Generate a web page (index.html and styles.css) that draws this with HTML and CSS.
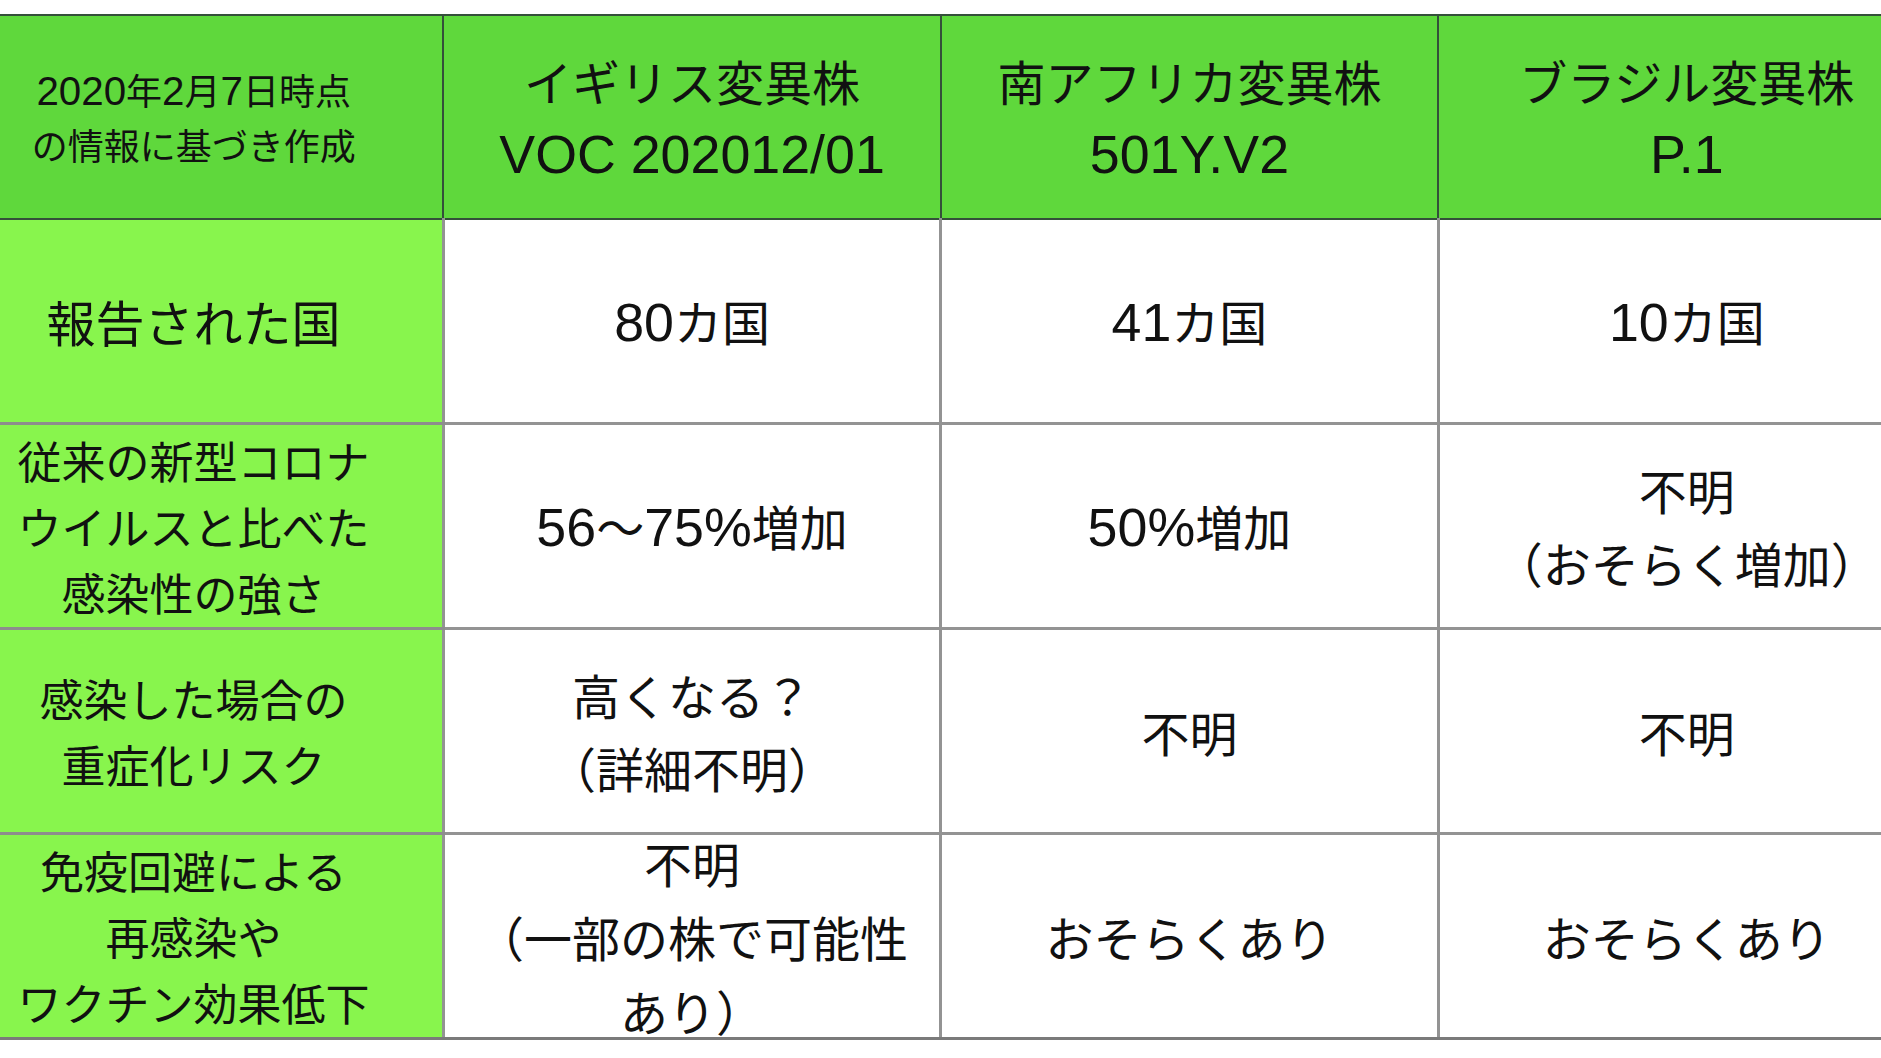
FILE: index.html
```html
<!DOCTYPE html>
<html lang="ja">
<head>
<meta charset="utf-8">
<title>変異株の比較</title>
<link rel="stylesheet" href="styles.css">
</head>
<body>
<div class="frame">
<table class="variants">
  <colgroup>
    <col class="c-label">
    <col class="c-data">
    <col class="c-data">
    <col class="c-data">
  </colgroup>
  <thead>
    <tr>
      <th class="corner"><span class="lat">2020</span>年<span class="lat">2</span>月<span class="lat">7</span>日時点<br>の情報に基づき作成</th>
      <th class="head">イギリス変異株<br><span class="lat">VOC 202012/01</span></th>
      <th class="head">南アフリカ変異株<br><span class="lat">501Y.V2</span></th>
      <th class="head">ブラジル変異株<br><span class="lat">P.1</span></th>
    </tr>
  </thead>
  <tbody>
    <tr>
      <th class="label big">報告された国</th>
      <td><span class="lat">80</span>カ国</td>
      <td><span class="lat">41</span>カ国</td>
      <td><span class="lat">10</span>カ国</td>
    </tr>
    <tr>
      <th class="label">従来の新型コロナ<br>ウイルスと比べた<br>感染性の強さ</th>
      <td><span class="lat">56</span>〜<span class="lat">75%</span>増加</td>
      <td><span class="lat">50%</span>増加</td>
      <td>不明<br>（おそらく増加）</td>
    </tr>
    <tr>
      <th class="label">感染した場合の<br>重症化リスク</th>
      <td>高くなる？<br>（詳細不明）</td>
      <td>不明</td>
      <td>不明</td>
    </tr>
    <tr>
      <th class="label">免疫回避による<br>再感染や<br>ワクチン効果低下</th>
      <td><div class="spill"><div class="spill-text">不明<br>（一部の株で可能性<br>あり）</div></div></td>
      <td>おそらくあり</td>
      <td>おそらくあり</td>
    </tr>
  </tbody>
</table>
</div>
</body>
</html>
```

FILE: styles.css
```css
html, body {
  margin: 0;
  padding: 0;
  background: #ffffff;
  overflow: hidden;
}

.frame {
  padding-top: 14px;
  width: 1881px;
  height: 1044px;
  overflow: hidden;
}

.variants {
  margin-left: -55px;
  border-collapse: collapse;
  table-layout: fixed;
  width: 1992px;
  font-family: "Noto Sans CJK JP", "Noto Sans", sans-serif;
  color: #111111;
}

.lat {
  font-family: "Liberation Sans", "Noto Sans", sans-serif;
  font-size: 1.12em;
}

.c-label { width: 498px; }
.c-data { width: 497px; }

.variants th,
.variants td {
  height: 202px;
  padding: 0;
  text-align: center;
  vertical-align: middle;
  font-weight: 400;
  overflow: visible;
  white-space: nowrap;
}

.variants thead th {
  background: #5fd83c;
  border: 2px solid #34503a;
  font-size: 48px;
  line-height: 72px;
}

.variants thead th.corner {
  font-size: 36px;
  line-height: 53px;
  border-left: none;
}

.variants tbody th.label {
  background: #88f54d;
  font-size: 44px;
  line-height: 66px;
  border-top: 3px solid #8d8d8d;
  border-bottom: 3px solid #8d8d8d;
  border-right: 2px solid #5d5d5d;
}

.variants tbody th.label.big {
  font-size: 49px;
  line-height: 72px;
}

.variants tbody td {
  background: #ffffff;
  font-size: 48px;
  line-height: 73px;
  border: 3px solid #939393;
}

.variants tbody tr:first-child th,
.variants tbody tr:first-child td {
  border-top: 2px solid #34503a;
}

.variants tbody tr:last-child th,
.variants tbody tr:last-child td {
  border-bottom: 3px solid #7a7a7a;
}

.spill {
  height: 202px;
  display: flex;
  flex-direction: column;
  justify-content: center;
  align-items: center;
  overflow: visible;
}

.spill-text {
  line-height: 74px;
  flex: none;
}
```
